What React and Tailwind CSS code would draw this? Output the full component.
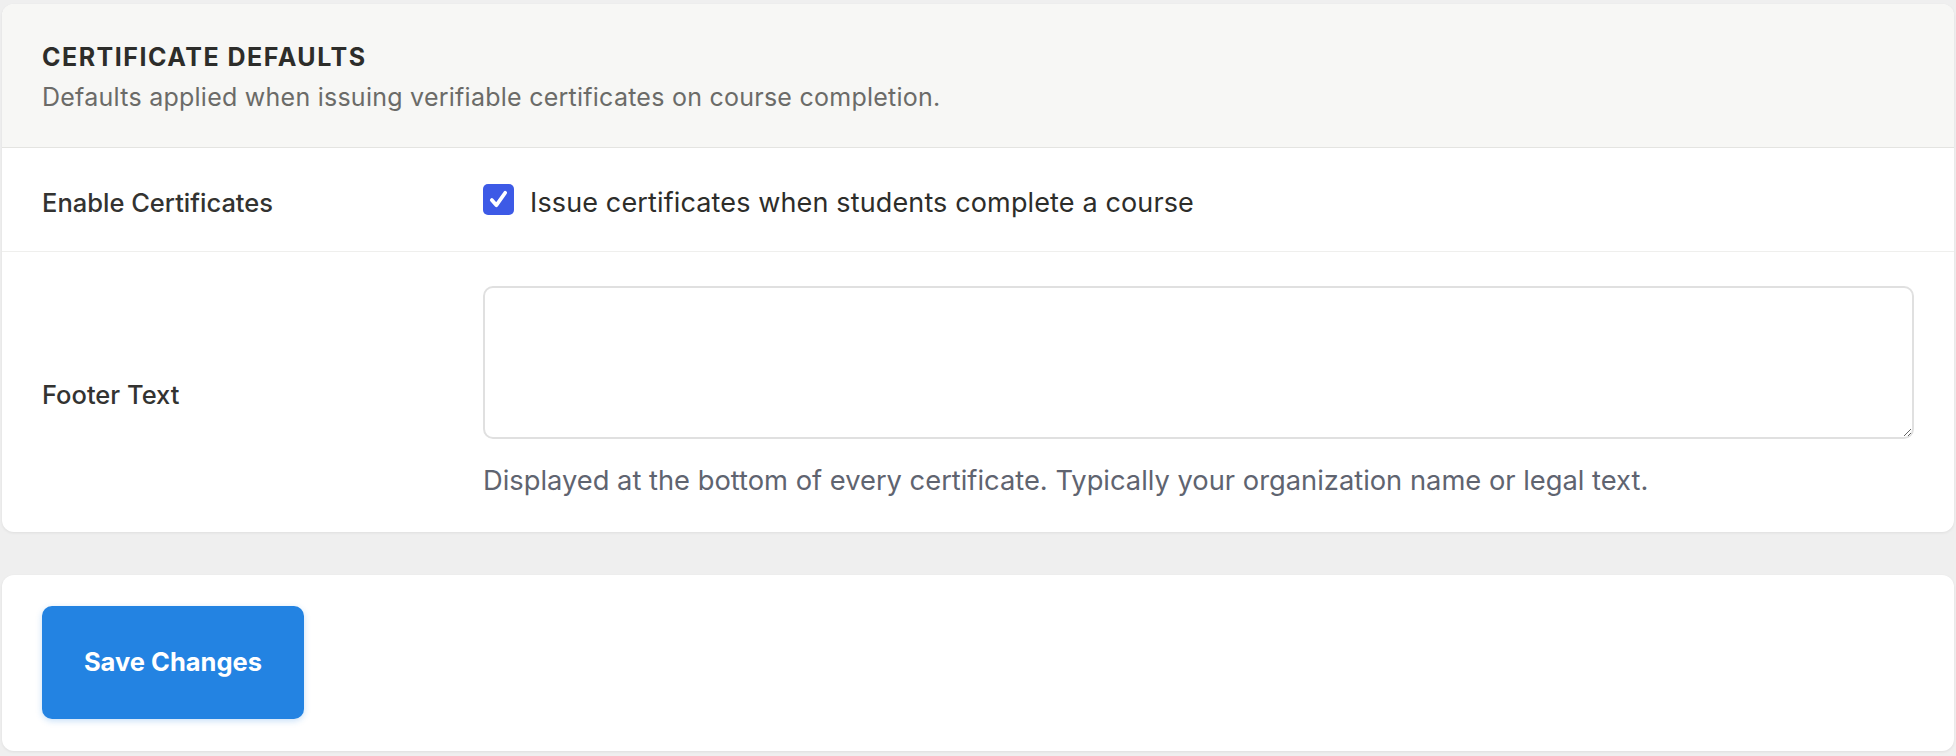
import React, { useState } from 'react';

const font = { fontFamily: 'Inter, "Noto Sans", sans-serif' };

function CheckBox({ checked, onChange }) {
  return (
    <button
      type="button"
      onClick={() => onChange(!checked)}
      className={`flex h-[31px] w-[31px] shrink-0 items-center justify-center rounded-[5px] ${
        checked ? 'bg-[#3d5ae6]' : 'border-2 border-[#c9c9c9] bg-white'
      }`}
    >
      {checked && (
        <svg viewBox="0 0 30 30" className="h-[31px] w-[31px]">
          <path d="M8.5 15.5 L13 20.5 L21.5 8.5" fill="none" stroke="#fff" strokeWidth="3.6" strokeLinecap="round" strokeLinejoin="round" />
        </svg>
      )}
    </button>
  );
}

export default function App() {
  const [enabled, setEnabled] = useState(true);
  const [footer, setFooter] = useState('');

  return (
    <div className="min-h-screen bg-[#efefef] px-[2px] pt-[4px] pb-[4px]" style={font}>
      {/* Certificate settings card */}
      <div className="overflow-hidden rounded-[12px] bg-white shadow-[0_1px_3px_rgba(0,0,0,0.07)]">
        <div className="flex h-[144px] flex-col justify-center border-b border-[#e4e4e1] bg-[#f7f7f5] px-[40px] pt-[3px]">
          <h3 className="text-[25px] font-bold uppercase leading-[32px] tracking-[0.06em] text-[#2d2d2a]">
            Certificate Defaults
          </h3>
          <p className="mt-[7px] text-[25px] leading-[34px] tracking-[0.01em] text-[#6b6b68]">
            Defaults applied when issuing verifiable certificates on course completion.
          </p>
        </div>

        <div className="flex h-[104px] items-center border-b border-[#efefed] px-[40px]">
          <div className="w-[441px] pt-[7px] text-[25.5px] font-medium text-[#333331]">Enable Certificates</div>
          <label className="flex cursor-pointer items-center gap-[16px]">
            <CheckBox checked={enabled} onChange={setEnabled} />
            <span className="pt-[7px] text-[27px] tracking-[0.005em] text-[#2d2d2a]">Issue certificates when students complete a course</span>
          </label>
        </div>

        <div className="flex items-center px-[40px] pt-[34px] pb-[34px]">
          <div className="w-[441px] pt-[7px] text-[25.5px] font-medium text-[#333331]">Footer Text</div>
          <div className="flex-1">
            <textarea
              value={footer}
              onChange={e => setFooter(e.target.value)}
              className="block h-[153px] w-full rounded-[10px] border-2 border-[#e0e0e0] bg-white px-[14px] py-[10px] text-[24px] outline-none"
            />
            <p className="mt-[25px] text-[27.3px] leading-[34px] text-[#5f6470]">
              Displayed at the bottom of every certificate. Typically your organization name or legal text.
            </p>
          </div>
        </div>
      </div>

      {/* Actions card */}
      <div className="mt-[43px] rounded-[12px] bg-white px-[40px] pt-[31px] pb-[32px] shadow-[0_1px_3px_rgba(0,0,0,0.07)]">
        <button
          type="button"
          className="flex h-[113px] w-[262px] items-center justify-center rounded-[10px] bg-[#2383e2] text-[25.5px] font-bold text-white shadow-[0_2px_6px_rgba(35,131,226,0.25)]"
        >
          Save Changes
        </button>
      </div>
    </div>
  );
}
